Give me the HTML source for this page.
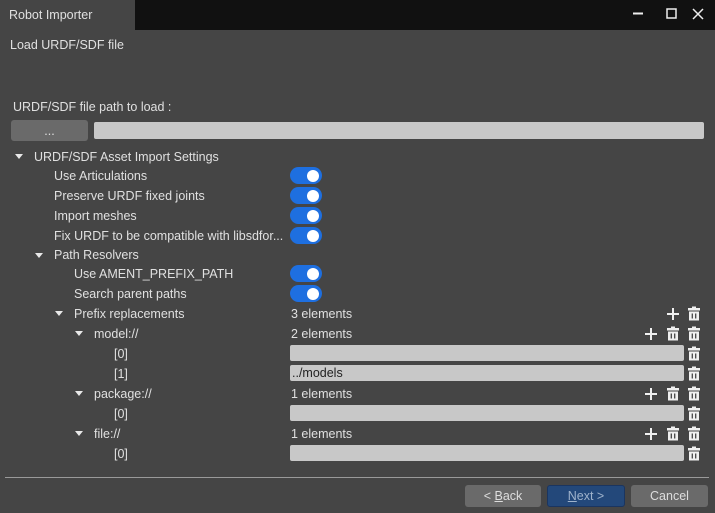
<!DOCTYPE html>
<html><head><style>
body{margin:0;width:715px;height:513px;background:#454545;font-family:"Liberation Sans",sans-serif;font-size:12.5px;color:#e0e0e0;position:relative;overflow:hidden}
.a{position:absolute;white-space:nowrap}
.tog{position:absolute;left:290px;width:32px;height:17px;border-radius:9px;background:#1e6fe0}
.tog::after{content:"";position:absolute;right:3px;top:2.5px;width:12px;height:12px;border-radius:50%;background:#fff}
.inp{position:absolute;left:290px;width:394px;height:16px;background:#c8c8c8;border-radius:2px;color:#222;line-height:16px;padding-left:2px;box-sizing:border-box}
.tri{position:absolute;width:0;height:0;border-left:4px solid transparent;border-right:4px solid transparent;border-top:5px solid #e8e8e8}
.btn{position:absolute;top:485px;height:22px;border-radius:3px;background:#6a6a6a;text-align:center;line-height:22px;color:#ddd}
.t{margin-top:1px}
</style></head><body>
<div class="a" style="left:135px;top:0;width:580px;height:30px;background:#111"></div>
<div class="a" style="left:9px;top:8px">Robot Importer</div>
<svg class="a" style="left:630px;top:6px" width="80" height="16"><path d="M3 7.5h10" stroke="#eee" stroke-width="2"/><rect x="37" y="3" width="9" height="9" fill="none" stroke="#eee" stroke-width="1.5"/><path d="M63 3l10 10M73 3l-10 10" stroke="#eee" stroke-width="1.5"/></svg>
<div class="a" style="left:10px;top:38px">Load URDF/SDF file</div>
<div class="a" style="left:13px;top:100px">URDF/SDF file path to load :</div>
<div class="a" style="left:11px;top:120px;width:77px;height:21px;background:#6a6a6a;border-radius:3px;text-align:center;line-height:23px">...</div>
<div class="a" style="left:94px;top:122px;width:610px;height:17px;background:#c8c8c8;border-radius:2px"></div>
<div class="tri" style="left:15px;top:154px"></div><div class="a" style="left:34px;top:150px">URDF/SDF Asset Import Settings</div>
<div class="a" style="left:54px;top:169px">Use Articulations</div><div class="tog" style="top:167px"></div>
<div class="a" style="left:54px;top:189px">Preserve URDF fixed joints</div><div class="tog" style="top:187px"></div>
<div class="a" style="left:54px;top:209px">Import meshes</div><div class="tog" style="top:207px"></div>
<div class="a" style="left:54px;top:229px">Fix URDF to be compatible with libsdfor...</div><div class="tog" style="top:227px"></div>
<div class="tri" style="left:35px;top:253px"></div><div class="a" style="left:54px;top:248px">Path Resolvers</div>
<div class="a" style="left:74px;top:267px">Use AMENT_PREFIX_PATH</div><div class="tog" style="top:265px"></div>
<div class="a" style="left:74px;top:287px">Search parent paths</div><div class="tog" style="top:285px"></div>
<div class="tri" style="left:55px;top:311px"></div><div class="a" style="left:74px;top:307px">Prefix replacements</div><div class="a" style="left:291px;top:307px">3 elements</div>
<div class="tri" style="left:75px;top:331px"></div><div class="a" style="left:94px;top:327px">model://</div><div class="a" style="left:291px;top:327px">2 elements</div>
<div class="a" style="left:114px;top:347px">[0]</div><div class="inp" style="top:345px"></div>
<div class="a" style="left:114px;top:367px">[1]</div><div class="inp" style="top:365px">../models</div>
<div class="tri" style="left:75px;top:391px"></div><div class="a" style="left:94px;top:387px">package://</div><div class="a" style="left:291px;top:387px">1 elements</div>
<div class="a" style="left:114px;top:407px">[0]</div><div class="inp" style="top:405px"></div>
<div class="tri" style="left:75px;top:431px"></div><div class="a" style="left:94px;top:427px">file://</div><div class="a" style="left:291px;top:427px">1 elements</div>
<div class="a" style="left:114px;top:447px">[0]</div><div class="inp" style="top:445px"></div>
<svg class="a" style="left:640px;top:300px" width="75" height="170">
<defs>
<g id="t"><rect x="-6" y="-6" width="12" height="2.5" fill="#f0f0f0"/><rect x="-2" y="-7.5" width="4" height="2" fill="#f0f0f0"/><rect x="-5" y="-2.5" width="10" height="9" fill="#f0f0f0"/><path d="M-1.7-0.5v5 M1.7-0.5v5" stroke="#454545" stroke-width="1.3"/></g>
<g id="p"><path d="M-6 0h12M0-6v12" stroke="#f0f0f0" stroke-width="2"/></g>
</defs>
<use href="#p" x="33" y="14"/><use href="#t" x="54" y="14"/>
<use href="#p" x="11" y="34"/><use href="#t" x="33" y="34"/><use href="#t" x="54" y="34"/>
<use href="#t" x="54" y="54"/><use href="#t" x="54" y="74"/>
<use href="#p" x="11" y="94"/><use href="#t" x="33" y="94"/><use href="#t" x="54" y="94"/>
<use href="#t" x="54" y="114"/>
<use href="#p" x="11" y="134"/><use href="#t" x="33" y="134"/><use href="#t" x="54" y="134"/>
<use href="#t" x="54" y="154"/>
</svg>
<div class="a" style="left:5px;top:477px;width:704px;height:1px;background:#9a9a9a"></div>
<div class="btn" style="left:465px;width:76px">&lt; <u>B</u>ack</div>
<div class="btn" style="left:547px;width:78px;background:#23487a;border:1px solid #1a3560;box-sizing:border-box;line-height:20px;color:#9fb3cc"><u>N</u>ext &gt;</div>
<div class="btn" style="left:631px;width:77px">Cancel</div>
</body></html>
